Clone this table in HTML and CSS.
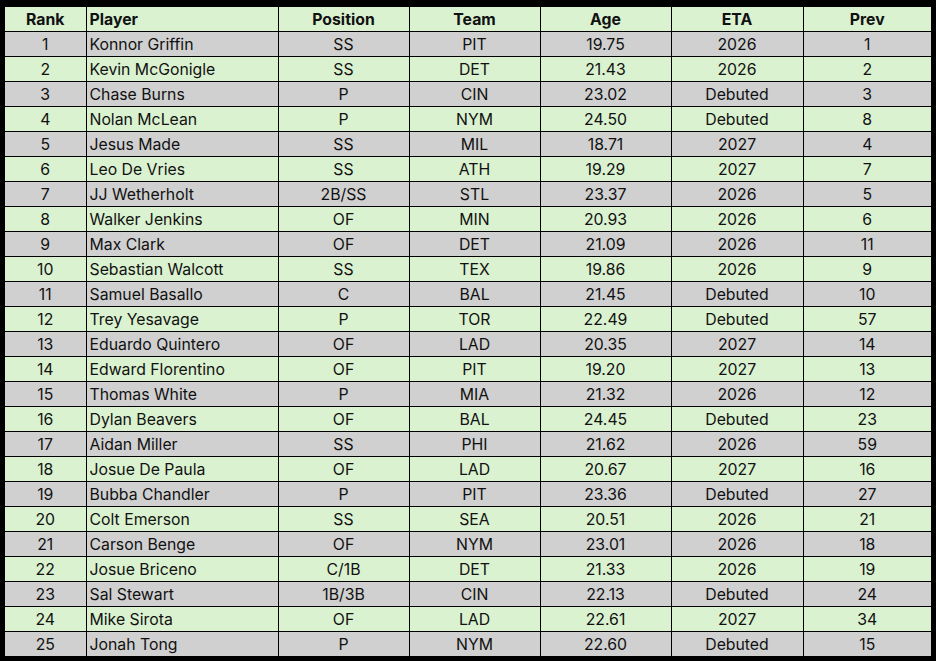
FILE: index.html
```html
<!DOCTYPE html>
<html>
<head>
<meta charset="utf-8">
<link rel="stylesheet" href="styles.css">
</head>
<body>
<table class="board">
<colgroup>
<col class="c-rank"><col class="c-player"><col class="c-pos"><col class="c-team"><col class="c-age"><col class="c-eta"><col class="c-prev">
</colgroup>
<thead>
<tr class="head"><th>Rank</th><th class="left">Player</th><th>Position</th><th>Team</th><th>Age</th><th>ETA</th><th>Prev</th></tr>
</thead>
<tbody>
<tr class="g"><td>1</td><td class="left">Konnor Griffin</td><td>SS</td><td>PIT</td><td>19.75</td><td>2026</td><td>1</td></tr>
<tr class="l"><td>2</td><td class="left">Kevin McGonigle</td><td>SS</td><td>DET</td><td>21.43</td><td>2026</td><td>2</td></tr>
<tr class="g"><td>3</td><td class="left">Chase Burns</td><td>P</td><td>CIN</td><td>23.02</td><td>Debuted</td><td>3</td></tr>
<tr class="l"><td>4</td><td class="left">Nolan McLean</td><td>P</td><td>NYM</td><td>24.50</td><td>Debuted</td><td>8</td></tr>
<tr class="g"><td>5</td><td class="left">Jesus Made</td><td>SS</td><td>MIL</td><td>18.71</td><td>2027</td><td>4</td></tr>
<tr class="l"><td>6</td><td class="left">Leo De Vries</td><td>SS</td><td>ATH</td><td>19.29</td><td>2027</td><td>7</td></tr>
<tr class="g"><td>7</td><td class="left">JJ Wetherholt</td><td>2B/SS</td><td>STL</td><td>23.37</td><td>2026</td><td>5</td></tr>
<tr class="l"><td>8</td><td class="left">Walker Jenkins</td><td>OF</td><td>MIN</td><td>20.93</td><td>2026</td><td>6</td></tr>
<tr class="g"><td>9</td><td class="left">Max Clark</td><td>OF</td><td>DET</td><td>21.09</td><td>2026</td><td>11</td></tr>
<tr class="l"><td>10</td><td class="left">Sebastian Walcott</td><td>SS</td><td>TEX</td><td>19.86</td><td>2026</td><td>9</td></tr>
<tr class="g"><td>11</td><td class="left">Samuel Basallo</td><td>C</td><td>BAL</td><td>21.45</td><td>Debuted</td><td>10</td></tr>
<tr class="l"><td>12</td><td class="left">Trey Yesavage</td><td>P</td><td>TOR</td><td>22.49</td><td>Debuted</td><td>57</td></tr>
<tr class="g"><td>13</td><td class="left">Eduardo Quintero</td><td>OF</td><td>LAD</td><td>20.35</td><td>2027</td><td>14</td></tr>
<tr class="l"><td>14</td><td class="left">Edward Florentino</td><td>OF</td><td>PIT</td><td>19.20</td><td>2027</td><td>13</td></tr>
<tr class="g"><td>15</td><td class="left">Thomas White</td><td>P</td><td>MIA</td><td>21.32</td><td>2026</td><td>12</td></tr>
<tr class="l"><td>16</td><td class="left">Dylan Beavers</td><td>OF</td><td>BAL</td><td>24.45</td><td>Debuted</td><td>23</td></tr>
<tr class="g"><td>17</td><td class="left">Aidan Miller</td><td>SS</td><td>PHI</td><td>21.62</td><td>2026</td><td>59</td></tr>
<tr class="l"><td>18</td><td class="left">Josue De Paula</td><td>OF</td><td>LAD</td><td>20.67</td><td>2027</td><td>16</td></tr>
<tr class="g"><td>19</td><td class="left">Bubba Chandler</td><td>P</td><td>PIT</td><td>23.36</td><td>Debuted</td><td>27</td></tr>
<tr class="l"><td>20</td><td class="left">Colt Emerson</td><td>SS</td><td>SEA</td><td>20.51</td><td>2026</td><td>21</td></tr>
<tr class="g"><td>21</td><td class="left">Carson Benge</td><td>OF</td><td>NYM</td><td>23.01</td><td>2026</td><td>18</td></tr>
<tr class="l"><td>22</td><td class="left">Josue Briceno</td><td>C/1B</td><td>DET</td><td>21.33</td><td>2026</td><td>19</td></tr>
<tr class="g"><td>23</td><td class="left">Sal Stewart</td><td>1B/3B</td><td>CIN</td><td>22.13</td><td>Debuted</td><td>24</td></tr>
<tr class="l"><td>24</td><td class="left">Mike Sirota</td><td>OF</td><td>LAD</td><td>22.61</td><td>2027</td><td>34</td></tr>
<tr class="g"><td>25</td><td class="left">Jonah Tong</td><td>P</td><td>NYM</td><td>22.60</td><td>Debuted</td><td>15</td></tr>
</tbody>
</table>
</body>
</html>
```
FILE: styles.css
```css
html, body {
  margin: 0;
  padding: 0;
  background: #000;
}
body {
  padding: 7px 5px 4px 5px;
  width: 936px;
  height: 661px;
  box-sizing: border-box;
  overflow: hidden;
}
.board {
  border-collapse: collapse;
  table-layout: fixed;
  width: 926px;
  font-family: Inter, "Noto Sans", sans-serif;
  font-size: 15.8px;
  color: #111;
}
.c-rank { width: 81px; }
.c-player { width: 192px; }
.c-pos { width: 131px; }
.c-team { width: 131px; }
.c-age { width: 131px; }
.c-eta { width: 132px; }
.c-prev { width: 128px; }
.board th, .board td {
  border: 1px solid #000;
  height: 24px;
  box-sizing: border-box;
  padding: 2px 3px 0 3px;
  text-align: center;
  white-space: nowrap;
  line-height: 22px;
}
.board tr:first-child th { border-top: none; }
.board th:first-child, .board td:first-child { border-left: none; }
.board th:last-child, .board td:last-child { border-right: none; }
.board tbody tr:last-child td { border-bottom: none; }
.board th {
  font-weight: 700;
  background: #daf2d0;
}
.board .left { text-align: left; }
.g td { background: #d0d0d0; }
.l td { background: #daf2d0; }
```
